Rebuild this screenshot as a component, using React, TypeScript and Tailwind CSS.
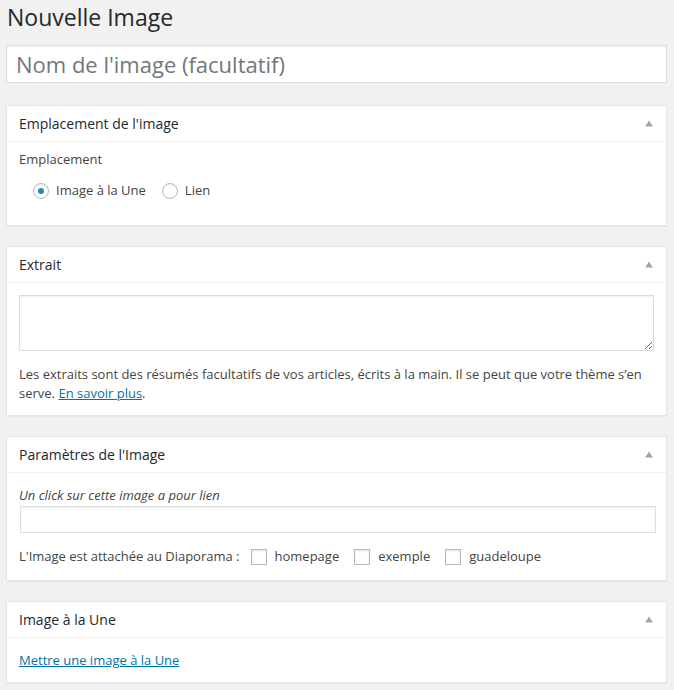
import React, { useState } from 'react';

const Toggle: React.FC = () => (
  <svg width="8" height="7" viewBox="0 0 8 7" className="shrink-0">
    <path d="M4 0.5 L7.8 6.5 L0.2 6.5 Z" fill="#a0a5aa" />
  </svg>
);

const Postbox: React.FC<{ title: string; children: React.ReactNode; bodyClass?: string }> = ({ title, children, bodyClass }) => (
  <div className="bg-white border border-[#e5e5e5] shadow-[0_1px_1px_rgba(0,0,0,0.04)] mb-[20px]">
    <div className="flex items-center justify-between border-b border-[#eeeeee] pl-[12px] pr-[13px] h-[36px]">
      <h2 className="text-[14px] leading-[19px] text-[#23282d] font-[500]">{title}</h2>
      <Toggle />
    </div>
    <div className={bodyClass}>{children}</div>
  </div>
);

const Radio: React.FC<{ checked?: boolean; label: string; onClick: () => void }> = ({ checked, label, onClick }) => (
  <label className="flex items-center cursor-pointer" onClick={onClick}>
    <span className="w-[16px] h-[16px] rounded-full border border-[#b4b9be] bg-white shadow-[inset_0_1px_2px_rgba(0,0,0,0.07)] flex items-center justify-center">
      {checked && <span className="w-[6px] h-[6px] rounded-full bg-[#1e8cbe]" />}
    </span>
    <span className="ml-[7px]">{label}</span>
  </label>
);

const Checkbox: React.FC<{ label: string }> = ({ label }) => (
  <label className="flex items-center">
    <span className="w-[16px] h-[16px] border border-[#b4b9be] bg-white shadow-[inset_0_1px_2px_rgba(0,0,0,0.1)]" />
    <span className="ml-[8px]">{label}</span>
  </label>
);

export default function App() {
  const [place, setPlace] = useState<'une' | 'lien'>('une');

  return (
    <div className="min-h-[690px] bg-[#f1f1f1] pl-[6px] pr-[7px] text-[13px] leading-[19px] text-[#444] font-['Open_Sans',sans-serif]">
      <h1 className="pt-[3px] pl-[1px] text-[23px] leading-[29px] text-[#23282d] font-normal">Nouvelle Image</h1>

      <input
        type="text"
        placeholder="Nom de l'image (facultatif)"
        className="mt-[13px] block w-full h-[38px] bg-white border border-[#dddddd] px-[9px] text-[22px] text-[#32373c] placeholder:text-[#72777c] outline-none shadow-[inset_0_1px_2px_rgba(0,0,0,0.07)]"
      />

      <div className="mt-[22px]">
        <Postbox title="Emplacement de l'image" bodyClass="px-[12px] pt-[8px] pb-[25px]">
          <p>Emplacement</p>
          <div className="flex items-center gap-[16px] pl-[14px] mt-[12px]">
            <Radio checked={place === 'une'} label="Image à la Une" onClick={() => setPlace('une')} />
            <Radio checked={place === 'lien'} label="Lien" onClick={() => setPlace('lien')} />
          </div>
        </Postbox>

        <Postbox title="Extrait" bodyClass="px-[12px] pt-[12px] pb-[12px]">
          <textarea className="block w-full h-[56px] border border-[#dddddd] shadow-[inset_0_1px_2px_rgba(0,0,0,0.07)] outline-none p-[4px]" />
          <p className="mt-[14px]">
            Les extraits sont des résumés facultatifs de vos articles, écrits à la main. Il se peut que votre thème s’en serve.{' '}
            <a href="#" className="text-[#0073aa] underline">En savoir plus</a>.
          </p>
        </Postbox>

        <Postbox title="Paramètres de l'Image" bodyClass="pl-[13px] pr-[10px] pt-[13px] pb-[14px]">
          <p className="italic -ml-[1px]">Un click sur cette image a pour lien</p>
          <input type="text" className="block w-full h-[27px] mt-[1px] border border-[#dddddd] shadow-[inset_0_1px_2px_rgba(0,0,0,0.07)] outline-none" />
          <div className="flex items-center mt-[14px] -ml-[1px]">
            <span>L'Image est attachée au Diaporama :</span>
            <div className="flex items-center gap-[15px] ml-[11px]">
              <Checkbox label="homepage" />
              <Checkbox label="exemple" />
              <Checkbox label="guadeloupe" />
            </div>
          </div>
        </Postbox>

        <Postbox title="Image à la Une" bodyClass="px-[12px] pt-[13px] pb-[12px]">
          <a href="#" className="text-[#0073aa] underline">Mettre une image à la Une</a>
        </Postbox>
      </div>
    </div>
  );
}
